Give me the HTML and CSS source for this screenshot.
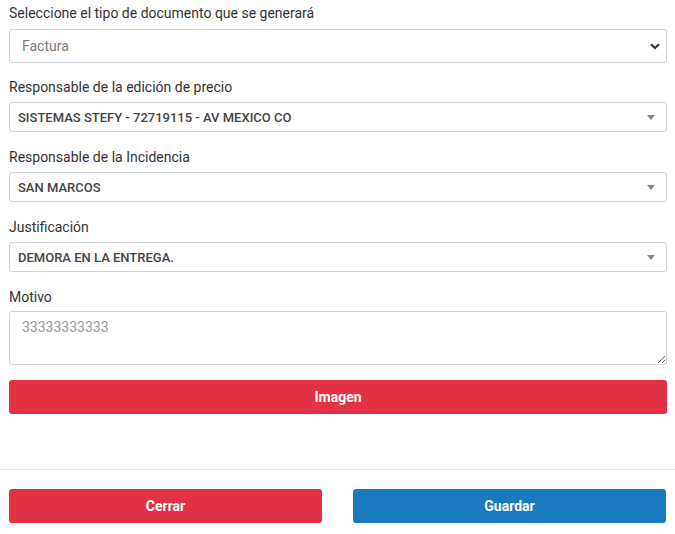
FILE: index.html
```html
<!DOCTYPE html>
<html lang="es">
<head>
<meta charset="utf-8">
<link rel="stylesheet" href="styles.css">
</head>
<body>
<div class="form">
  <div class="group first">
    <label class="label">Seleccione el tipo de documento que se generará</label>
    <div class="native-select">
      <span class="value light">Factura</span>
      <svg class="chev" width="10" height="7" viewBox="0 0 10 7"><path d="M1 1.2 L5 5 L9 1.2" fill="none" stroke="#333" stroke-width="2"/></svg>
    </div>
  </div>
  <div class="group">
    <label class="label">Responsable de la edición de precio</label>
    <div class="combo">
      <span class="value strong">SISTEMAS STEFY - 72719115 - AV MEXICO CO</span>
      <span class="tri"></span>
    </div>
  </div>
  <div class="group">
    <label class="label">Responsable de la Incidencia</label>
    <div class="combo">
      <span class="value strong">SAN MARCOS</span>
      <span class="tri"></span>
    </div>
  </div>
  <div class="group">
    <label class="label">Justificación</label>
    <div class="combo">
      <span class="value strong">DEMORA EN LA ENTREGA.</span>
      <span class="tri"></span>
    </div>
  </div>
  <div class="group motivo">
    <label class="label">Motivo</label>
    <textarea class="textarea" placeholder="33333333333"></textarea>
  </div>
  <button class="btn btn-red btn-full">Imagen</button>
</div>
<div class="footer">
  <button class="btn btn-red">Cerrar</button>
  <button class="btn btn-blue">Guardar</button>
</div>
</body>
</html>
```
FILE: styles.css
```css
* { box-sizing: border-box; }
html, body { margin: 0; padding: 0; background: #fff; }
body {
  font-family: Roboto, "Noto Sans", Arial, sans-serif;
  color: #333;
  width: 675px;
}
.form {
  padding: 3px 8px 0 9px;
  display: flex;
  flex-direction: column;
}
.group {
  display: flex;
  flex-direction: column;
  margin-bottom: 15px;
}
.group.first { margin-bottom: 14px; }
.group.motivo { margin-bottom: 15px; }
.label {
  font-size: 14px;
  line-height: 20px;
  color: #333;
  margin-bottom: 5px;
}
.group.first .label { margin-bottom: 6px; }
.motivo .label { margin-bottom: 4px; }
.native-select {
  height: 34px;
  border: 1px solid #ccd3da;
  border-radius: 3px;
  display: flex;
  align-items: center;
  justify-content: space-between;
  padding: 0 6px 0 12px;
}
.value.light {
  font-size: 14px;
  color: #7a7a7a;
}
.combo {
  height: 30px;
  border: 1px solid #ccd3da;
  border-radius: 3px;
  display: flex;
  align-items: center;
  justify-content: space-between;
  padding: 0 11px 0 8px;
}
.value.strong {
  font-size: 13px;
  font-weight: 500;
  color: #444;
}
.tri {
  width: 0;
  height: 0;
  border-left: 4px solid transparent;
  border-right: 4px solid transparent;
  border-top: 5px solid #888;
  margin-top: 1px;
}
.textarea {
  height: 54px;
  border: 1px solid #ccd3da;
  border-radius: 3px;
  padding: 5px 12px;
  font-family: Roboto, "Noto Sans", Arial, sans-serif;
  font-size: 14px;
  line-height: 20px;
  resize: vertical;
  color: #555;
  outline: none;
}
.textarea::placeholder { color: #999; opacity: 1; }
.btn {
  height: 34px;
  border: none;
  border-radius: 3px;
  color: #fff;
  font-family: Roboto, "Noto Sans", Arial, sans-serif;
  font-size: 14px;
  font-weight: 700;
  cursor: pointer;
}
.btn-red { background: #e33244; }
.btn-blue { background: #1a7abd; }
.btn-full { width: 100%; }
.footer {
  margin-top: 55px;
  border-top: 1px solid #e5e5e5;
  padding: 19px 9px 0 9px;
  display: flex;
  gap: 31px;
}
.footer .btn { flex: 1; width: 314px; }
```
